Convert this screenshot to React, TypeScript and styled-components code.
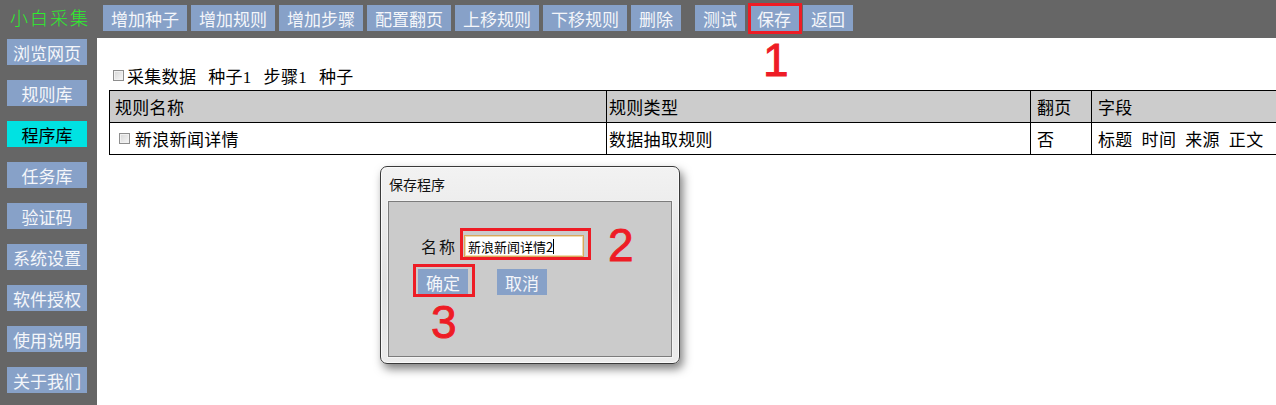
import React from "react";
import styled, { createGlobalStyle } from "styled-components";

const GlobalStyle = createGlobalStyle`
  html, body { margin: 0; padding: 0; background: #666666; }
  body { font-family: "Noto Sans CJK SC", "Noto Sans", sans-serif; }
  * { box-sizing: border-box; }
`;

const CJK = `"Noto Sans CJK SC", "Noto Sans", sans-serif`;
const SERIF_CJK = `"Liberation Serif", "Noto Sans CJK SC", serif`;

const Page = styled.div`
  position: relative;
  width: 1276px;
  height: 405px;
  overflow: hidden;
  display: grid;
  grid-template-columns: 97px 1fr;
  grid-template-rows: 38px 1fr;
  background: #666666;
`;

const TopBar = styled.div`
  grid-column: 1 / -1;
  display: flex;
  align-items: flex-start;
  padding: 5px 0 0 10px;
  gap: 4px;
`;

const Logo = styled.div`
  width: 89px;
  height: 26px;
  line-height: 24px;
  font-family: ${CJK};
  font-size: 18px;
  font-weight: 300;
  letter-spacing: 2px;
  color: #2cf02c;
`;

const Button = styled.div<{ $active?: boolean; $gapBefore?: number }>`
  height: 26px;
  padding: 0 8px;
  margin-left: ${(p) => p.$gapBefore ?? 0}px;
  display: flex;
  align-items: center;
  justify-content: center;
  background: ${(p) => (p.$active ? "#00e2e2" : "#87a1c8")};
  color: ${(p) => (p.$active ? "#000" : "#f4f6fa")};
  font-family: ${CJK};
  font-size: 17px;
  line-height: 1;
  white-space: nowrap;
`;

const SideBar = styled.div`
  display: flex;
  flex-direction: column;
  gap: 15px;
  padding: 1px 0 0 7px;
`;

const SideButton = styled(Button)`
  width: 80px;
  padding: 0;
`;

const Content = styled.div`
  background: #ffffff;
  overflow: hidden;
  padding: 27px 0 0 12px;
  font-family: ${SERIF_CJK};
  font-size: 17px;
  letter-spacing: 0.3px;
  color: #000;
`;

const FilterRow = styled.div`
  height: 20px;
  margin: 0 0 5px 4px;
  display: flex;
  align-items: center;
  gap: 12px;
  white-space: nowrap;
`;

const CheckLabel = styled.span`
  display: flex;
  align-items: center;
  gap: 3px;
`;

const Check = styled.span`
  display: inline-block;
  width: 11px;
  height: 11px;
  border: 1px solid #8e8e8e;
  background: linear-gradient(135deg, #d6d6d6, #f6f6f6);
  box-shadow: inset 0 0 0 1px #f0f0f0;
  flex: none;
`;

const Table = styled.table`
  border-collapse: collapse;
  table-layout: fixed;
  width: 1200px;
`;

const Th = styled.th<{ $pad: number }>`
  height: 32px;
  border: 1px solid #000;
  background: #cccccc;
  font-weight: normal;
  text-align: left;
  padding: 0 0 0 ${(p) => p.$pad}px;
  font-size: 17px;
`;

const Td = styled.td<{ $pad: number }>`
  height: 32px;
  border: 1px solid #000;
  padding: 0 0 0 ${(p) => p.$pad}px;
  white-space: nowrap;
`;

const CellInner = styled.div<{ $gap: number }>`
  display: flex;
  align-items: center;
  gap: ${(p) => p.$gap}px;
`;

const Dialog = styled.div`
  position: absolute;
  left: 380px;
  top: 166px;
  width: 300px;
  height: 198px;
  border: 1px solid #3a3a3a;
  border-radius: 7px;
  background: linear-gradient(180deg, #f2f2f2 0%, #e2e2e2 60%, #ececec 100%);
  box-shadow: 3px 5px 10px rgba(0, 0, 0, 0.5), inset 0 0 0 1px #fafafa;
  display: flex;
  flex-direction: column;
  padding: 0 7px 6px 7px;
`;

const DialogTitle = styled.div`
  height: 34px;
  padding: 7px 0 0 1px;
  font-family: ${CJK};
  font-size: 14px;
  color: #111;
`;

const DialogPanel = styled.div`
  flex: 1;
  border: 1px solid #7c7c7c;
  box-shadow: 0 0 0 1px #f4f4f4;
  background: #cbcbcb;
  padding: 32px 0 0 29px;
  display: flex;
  flex-direction: column;
  gap: 11px;
`;

const FieldRow = styled.div`
  display: flex;
  align-items: center;
`;

const Label = styled.div`
  width: 46px;
  padding-left: 3px;
  font-family: ${CJK};
  font-size: 16px;
  letter-spacing: 2px;
  color: #111;
`;

const FakeInput = styled.div`
  width: 120px;
  height: 22px;
  border: 1px solid #d9a85c;
  box-shadow: inset 0 0 0 1px #f2dcb0;
  background: #fff;
  padding-left: 3px;
  display: flex;
  align-items: center;
  font-family: ${CJK};
  font-size: 13px;
  color: #000;
`;

const Caret = styled.span`
  display: inline-block;
  width: 1px;
  height: 15px;
  background: #000;
`;

const ButtonRow = styled.div`
  display: flex;
  gap: 29px;
`;

const RedBox = styled.div<{ $l: number; $t: number; $w: number; $h: number }>`
  position: absolute;
  left: ${(p) => p.$l}px;
  top: ${(p) => p.$t}px;
  width: ${(p) => p.$w}px;
  height: ${(p) => p.$h}px;
  border: 3px solid #ee1c25;
  pointer-events: none;
`;

const Num = styled.div<{ $l: number; $t: number }>`
  position: absolute;
  left: ${(p) => p.$l}px;
  top: ${(p) => p.$t}px;
  font-family: "Liberation Sans", Arial, sans-serif;
  font-size: 46px;
  line-height: 46px;
  color: #ee1c25;
  -webkit-text-stroke: 0.9px #ee1c25;
  pointer-events: none;
`;

const topButtons = ["增加种子", "增加规则", "增加步骤", "配置翻页", "上移规则", "下移规则", "删除"];
const sideButtons = ["浏览网页", "规则库", "程序库", "任务库", "验证码", "系统设置", "软件授权", "使用说明", "关于我们"];
const filterWords = ["种子1", "步骤1", "种子"];
const fieldWords = ["标题", "时间", "来源", "正文"];

export default function App() {
  return (
    <>
      <GlobalStyle />
      <Page>
        <TopBar>
          <Logo>小白采集</Logo>
          {topButtons.map((b) => (
            <Button key={b}>{b}</Button>
          ))}
          <Button $gapBefore={10}>测试</Button>
          <Button>保存</Button>
          <Button>返回</Button>
        </TopBar>
        <SideBar>
          {sideButtons.map((b) => (
            <SideButton key={b} $active={b === "程序库"}>
              {b}
            </SideButton>
          ))}
        </SideBar>
        <Content>
          <FilterRow>
            <CheckLabel>
              <Check />
              <span>采集数据</span>
            </CheckLabel>
            {filterWords.map((w, i) => (
              <span key={i}>{w}</span>
            ))}
          </FilterRow>
          <Table>
            <colgroup>
              <col style={{ width: 497 }} />
              <col style={{ width: 424 }} />
              <col style={{ width: 61 }} />
              <col />
            </colgroup>
            <thead>
              <tr>
                <Th $pad={5}>规则名称</Th>
                <Th $pad={2}>规则类型</Th>
                <Th $pad={6}>翻页</Th>
                <Th $pad={6}>字段</Th>
              </tr>
            </thead>
            <tbody>
              <tr>
                <Td $pad={9}>
                  <CellInner $gap={5}>
                    <Check />
                    <span>新浪新闻详情</span>
                  </CellInner>
                </Td>
                <Td $pad={2}>数据抽取规则</Td>
                <Td $pad={6}>否</Td>
                <Td $pad={6}>
                  <CellInner $gap={9}>
                    {fieldWords.map((w) => (
                      <span key={w}>{w}</span>
                    ))}
                  </CellInner>
                </Td>
              </tr>
            </tbody>
          </Table>
        </Content>

        <Dialog>
          <DialogTitle>保存程序</DialogTitle>
          <DialogPanel>
            <FieldRow>
              <Label>名称</Label>
              <FakeInput>
                新浪新闻详情2
                <Caret />
              </FakeInput>
            </FieldRow>
            <ButtonRow>
              <Button>确定</Button>
              <Button>取消</Button>
            </ButtonRow>
          </DialogPanel>
        </Dialog>

        <RedBox $l={748} $t={3} $w={54} $h={31} />
        <RedBox $l={460} $t={228} $w={131} $h={32} />
        <RedBox $l={413} $t={264} $w={62} $h={33} />
        <Num $l={763} $t={37}>1</Num>
        <Num $l={608} $t={222}>2</Num>
        <Num $l={431} $t={299}>3</Num>
      </Page>
    </>
  );
}
